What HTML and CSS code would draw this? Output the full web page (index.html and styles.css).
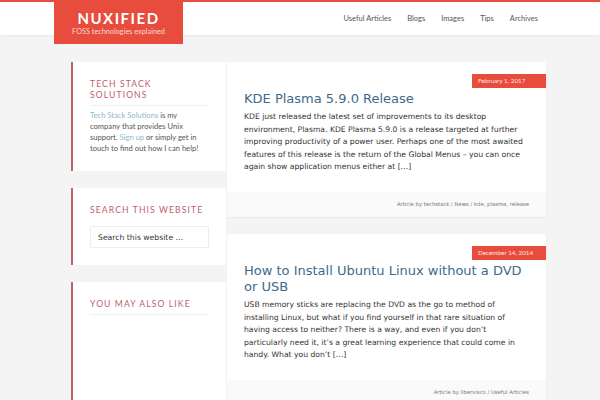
FILE: index.html
```html
<!DOCTYPE html>
<html lang="en">
<head>
<meta charset="utf-8">
<title>Nuxified</title>
<link rel="stylesheet" href="styles.css">
</head>
<body>
<header class="site-header">
  <div class="wrap header-inner">
    <div class="logo">
      <div class="logo-title">NUXIFIED</div>
      <div class="logo-desc">FOSS technologies explained</div>
    </div>
    <nav class="nav">
      <a href="#">Useful Articles</a>
      <a href="#">Blogs</a>
      <a href="#">Images</a>
      <a href="#">Tips</a>
      <a href="#">Archives</a>
    </nav>
  </div>
</header>
<div class="wrap content">
  <aside class="sidebar">
    <section class="widget">
      <h4 class="widget-title underlined">Tech Stack Solutions</h4>
      <p class="widget-text"><a href="#">Tech Stack Solutions</a> is my company that provides Unix support. <a href="#">Sign up</a> or simply get in touch to find out how I can help!</p>
    </section>
    <section class="widget">
      <h4 class="widget-title">Search this website</h4>
      <div class="search">Search this website …</div>
    </section>
    <section class="widget widget-tall">
      <h4 class="widget-title underlined">You may also like</h4>
    </section>
  </aside>
  <main class="main">
    <article class="entry">
      <div class="entry-meta"><span class="date">February 1, 2017</span></div>
      <h2 class="entry-title">KDE Plasma 5.9.0 Release</h2>
      <p class="entry-content">KDE just released the latest set of improvements to its desktop environment, Plasma. KDE Plasma 5.9.0 is a release targeted at further improving productivity of a power user. Perhaps one of the most awaited features of this release is the return of the Global Menus – you can once again show application menus either at […]</p>
      <footer class="entry-footer">Article by techstack / News / kde, plasma, release</footer>
    </article>
    <article class="entry">
      <div class="entry-meta"><span class="date">December 14, 2014</span></div>
      <h2 class="entry-title">How to Install Ubuntu Linux without a DVD or USB</h2>
      <p class="entry-content">USB memory sticks are replacing the DVD as the go to method of installing Linux, but what if you find yourself in that rare situation of having access to neither? There is a way, and even if you don’t particularly need it, it’s a great learning experience that could come in handy. What you don’t […]</p>
      <footer class="entry-footer">Article by libervisco / Useful Articles</footer>
    </article>
  </main>
</div>
</body>
</html>
```

FILE: styles.css
```css
html, body {
  margin: 0;
  padding: 0;
}
body {
  background: #f4f4f4;
  font-family: "DejaVu Sans", sans-serif;
  overflow: hidden;
}
a {
  text-decoration: none;
  color: inherit;
}
.wrap {
  width: 492px;
  margin: 0 auto;
}
.site-header {
  background: #fff;
  border-top: 2px solid #e74c3c;
  height: 33px;
  box-shadow: 0 1px 2px rgba(0, 0, 0, 0.05);
  position: relative;
  z-index: 1;
}
.header-inner {
  display: flex;
  justify-content: space-between;
  height: 33px;
}
.logo {
  background: #e74c3c;
  width: 129px;
  height: 44px;
  margin-top: -2px;
  box-sizing: border-box;
  padding-top: 10px;
  display: flex;
  flex-direction: column;
  align-items: center;
}
.logo-title {
  font: 700 15px/16px "Lato", sans-serif;
  letter-spacing: 1.5px;
  color: #fff;
}
.logo-desc {
  font: 7.3px/9px "Lato", sans-serif;
  color: #fbd7d3;
  margin-top: 1px;
}
.nav {
  display: flex;
  align-items: center;
  gap: 16px;
  padding-right: 8px;
  font: 7.5px "Lato", sans-serif;
  color: #555;
}
.content {
  display: grid;
  grid-template-columns: 172px 319px;
  column-gap: 1px;
  padding-top: 27px;
}
.sidebar {
  padding-left: 17px;
}
.widget {
  background: #fff;
  border-left: 2px solid #b8646a;
  padding: 17px;
  margin-bottom: 17px;
}
.widget-tall {
  min-height: 200px;
}
.widget-title {
  margin: 0;
  font: 400 8.6px/11px "Lato", sans-serif;
  letter-spacing: 1.1px;
  text-transform: uppercase;
  color: #c0606a;
}
.widget-title.underlined {
  padding-bottom: 4px;
  border-bottom: 1px solid #f0f0f0;
}
.widget-text {
  margin: 4px 0 0;
  font: 7.6px/11px "Lato", sans-serif;
  color: #555;
}
.widget-text a {
  color: #8fb8cc;
}
.search {
  margin-top: 10px;
  height: 22px;
  box-sizing: border-box;
  border: 1px solid #eee;
  padding-left: 7px;
  display: flex;
  align-items: center;
  font: 7.7px "DejaVu Sans", sans-serif;
  color: #333;
}
.entry {
  background: #fff;
  border-radius: 2px;
  box-shadow: 0 1px 2px rgba(0, 0, 0, 0.06);
  margin-bottom: 17px;
  overflow: hidden;
}
.entry-meta {
  display: flex;
  justify-content: flex-end;
  padding-top: 12px;
}
.date {
  background: #e74c3c;
  color: #fde5e2;
  font: 6.3px/14px "Lato", sans-serif;
  width: 74px;
  height: 14px;
  box-sizing: border-box;
  padding-left: 6px;
}
.entry-title {
  margin: 3px 17px 0;
  font: 400 13px/16px "DejaVu Sans", sans-serif;
  color: #3e6a8b;
}
.entry-content {
  margin: 4px 17px 0;
  font: 7.65px/12.6px "DejaVu Sans", sans-serif;
  color: #333;
}
.entry-footer {
  margin-top: 18px;
  background: #fafafa;
  height: 25px;
  padding: 0 17px;
  display: flex;
  align-items: center;
  justify-content: flex-end;
  font: 5.3px "DejaVu Sans", sans-serif;
  color: #777;
}
```
